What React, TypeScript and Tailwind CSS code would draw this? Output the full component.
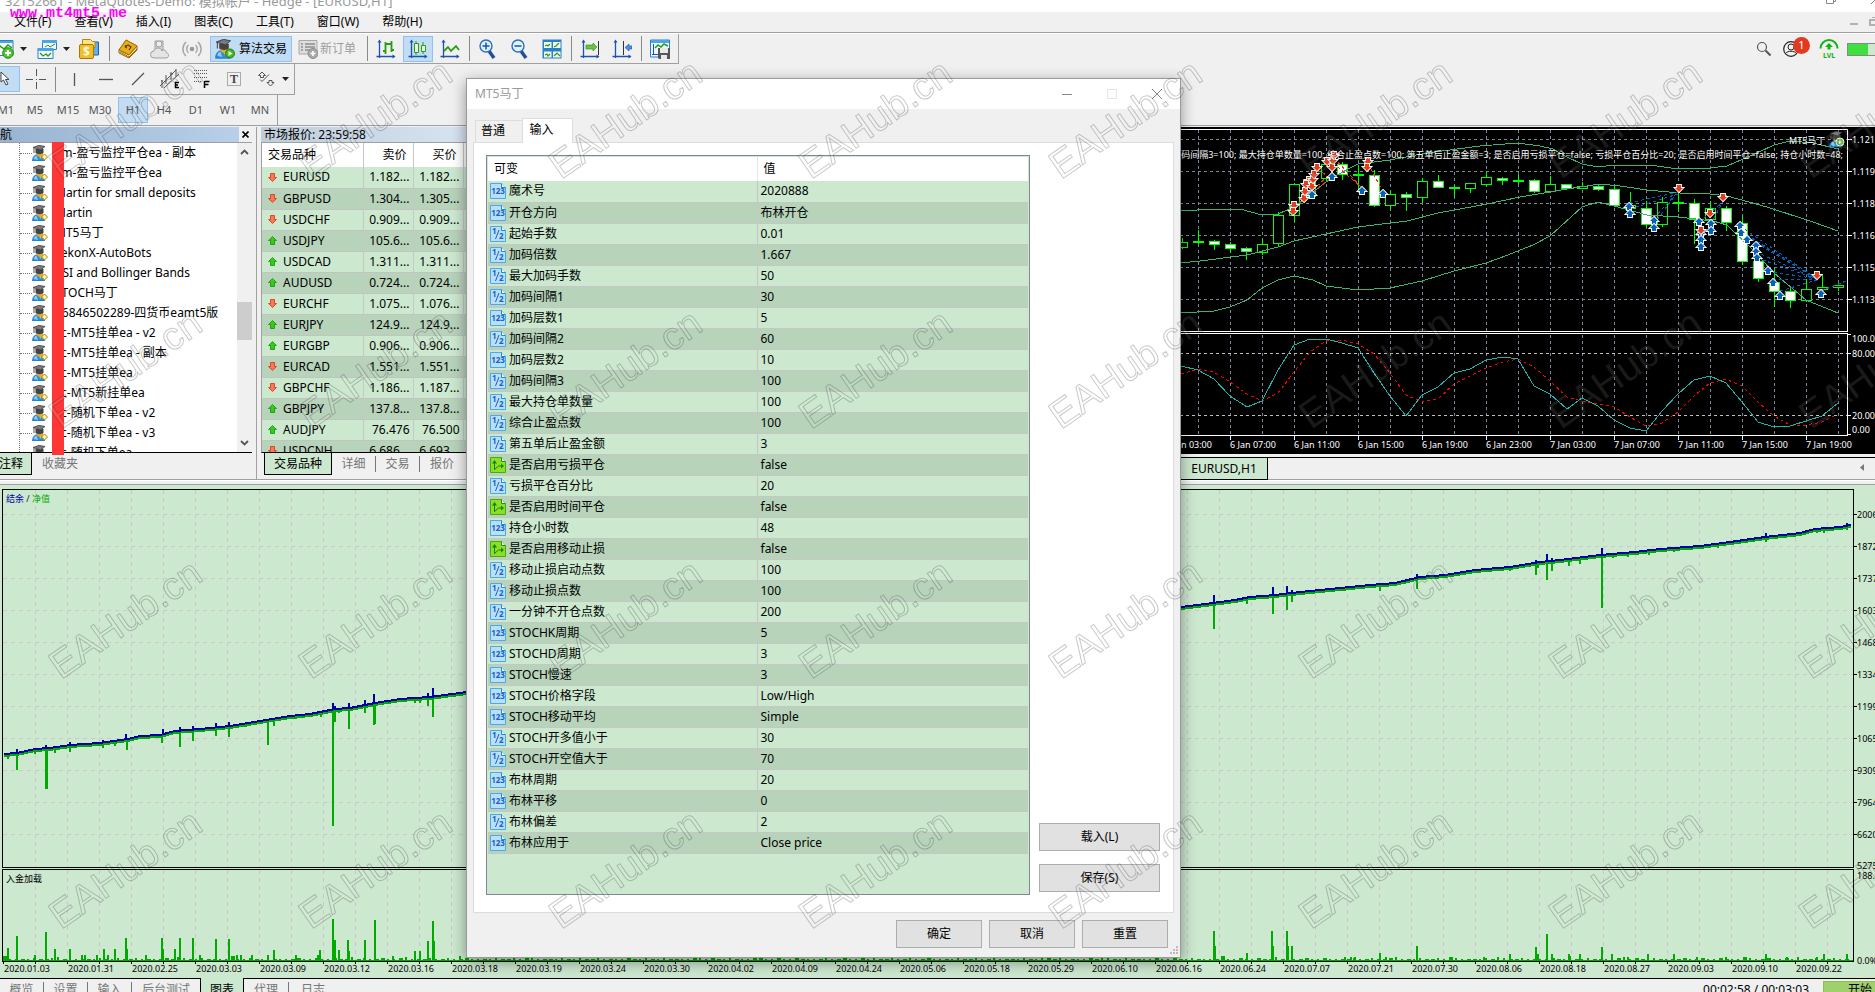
import type { ReactNode } from "react";
import clsx from "clsx";

/* ------------------------------------------------------------------ data */

const menus = ["文件(F)", "查看(V)", "插入(I)", "图表(C)", "工具(T)", "窗口(W)", "帮助(H)"];

const experts = [
  "xm-盈亏监控平仓ea - 副本",
  "xm-盈亏监控平仓ea",
  "Martin for small deposits",
  "Martin",
  "MT5马丁",
  "TekonX-AutoBots",
  "RSI and Bollinger Bands",
  "STOCH马丁",
  "56846502289-四货币eamt5版",
  "xc-MT5挂单ea - v2",
  "xc-MT5挂单ea - 副本",
  "xc-MT5挂单ea",
  "xc-MT5新挂单ea",
  "xc-随机下单ea - v2",
  "xc-随机下单ea - v3",
  "xc-随机下单ea",
];

type Quote = { symbol: string; up: boolean; bid: string; ask: string };

const quotes: Quote[] = [
  { symbol: "EURUSD", up: false, bid: "1.182...", ask: "1.182..." },
  { symbol: "GBPUSD", up: false, bid: "1.304...", ask: "1.305..." },
  { symbol: "USDCHF", up: false, bid: "0.909...", ask: "0.909..." },
  { symbol: "USDJPY", up: true, bid: "105.6...", ask: "105.6..." },
  { symbol: "USDCAD", up: true, bid: "1.311...", ask: "1.311..." },
  { symbol: "AUDUSD", up: true, bid: "0.724...", ask: "0.724..." },
  { symbol: "EURCHF", up: false, bid: "1.075...", ask: "1.076..." },
  { symbol: "EURJPY", up: true, bid: "124.9...", ask: "124.9..." },
  { symbol: "EURGBP", up: true, bid: "0.906...", ask: "0.906..." },
  { symbol: "EURCAD", up: false, bid: "1.551...", ask: "1.551..." },
  { symbol: "GBPCHF", up: false, bid: "1.186...", ask: "1.187..." },
  { symbol: "GBPJPY", up: true, bid: "137.8...", ask: "137.8..." },
  { symbol: "AUDJPY", up: true, bid: "76.476", ask: "76.500" },
  { symbol: "USDCNH", up: false, bid: "6.686...", ask: "6.693..." },
];

type ParamKind = "int" | "double" | "bool";

const params: [ParamKind, string, string][] = [
  ["int", "魔术号", "2020888"],
  ["int", "开仓方向", "布林开仓"],
  ["double", "起始手数", "0.01"],
  ["double", "加码倍数", "1.667"],
  ["double", "最大加码手数", "50"],
  ["double", "加码间隔1", "30"],
  ["int", "加码层数1", "5"],
  ["double", "加码间隔2", "60"],
  ["int", "加码层数2", "10"],
  ["double", "加码间隔3", "100"],
  ["double", "最大持仓单数量", "100"],
  ["double", "综合止盈点数", "100"],
  ["double", "第五单后止盈金额", "3"],
  ["bool", "是否启用亏损平仓", "false"],
  ["double", "亏损平仓百分比", "20"],
  ["bool", "是否启用时间平仓", "false"],
  ["int", "持仓小时数", "48"],
  ["bool", "是否启用移动止损", "false"],
  ["double", "移动止损启动点数", "100"],
  ["double", "移动止损点数", "100"],
  ["double", "一分钟不开仓点数", "200"],
  ["int", "STOCHK周期", "5"],
  ["int", "STOCHD周期", "3"],
  ["int", "STOCH慢速", "3"],
  ["int", "STOCH价格字段", "Low/High"],
  ["int", "STOCH移动平均", "Simple"],
  ["double", "STOCH开多值小于", "30"],
  ["double", "STOCH开空值大于", "70"],
  ["int", "布林周期", "20"],
  ["int", "布林平移", "0"],
  ["double", "布林偏差", "2"],
  ["int", "布林应用于", "Close price"],
];

// x, high, body top, body bottom, low, filled
const candles: [number, number, number, number, number, number][] = [
  [1182, 238, 242, 247, 249, 0],
  [1198, 230, 241, 242, 244, 0],
  [1214, 240, 241, 244, 250, 1],
  [1230, 242, 244, 248, 253, 1],
  [1246, 247, 248, 251, 260, 1],
  [1262, 239, 244, 252, 255, 0],
  [1278, 212, 215, 243, 247, 0],
  [1294, 183, 184, 215, 222, 0],
  [1310, 178, 180, 196, 198, 0],
  [1326, 163, 164, 178, 180, 0],
  [1342, 162, 164, 174, 180, 1],
  [1358, 165, 174, 175, 190, 0],
  [1374, 170, 175, 205, 207, 1],
  [1390, 191, 194, 205, 210, 0],
  [1406, 192, 194, 197, 211, 1],
  [1422, 178, 181, 197, 203, 0],
  [1438, 175, 181, 187, 188, 1],
  [1454, 186, 187, 188, 196, 0],
  [1470, 183, 183, 188, 193, 0],
  [1486, 172, 177, 184, 186, 0],
  [1502, 177, 178, 180, 185, 1],
  [1518, 175, 180, 181, 184, 0],
  [1534, 179, 180, 191, 193, 1],
  [1550, 176, 184, 191, 192, 0],
  [1566, 184, 184, 188, 189, 1],
  [1582, 182, 186, 188, 189, 0],
  [1598, 185, 186, 189, 191, 1],
  [1614, 186, 189, 205, 207, 1],
  [1630, 192, 205, 208, 210, 0],
  [1646, 201, 208, 224, 227, 1],
  [1662, 197, 202, 224, 227, 0],
  [1678, 193, 202, 203, 212, 0],
  [1694, 199, 203, 219, 244, 1],
  [1710, 201, 208, 219, 220, 0],
  [1726, 206, 208, 222, 231, 1],
  [1742, 216, 223, 261, 265, 1],
  [1758, 260, 261, 278, 282, 1],
  [1774, 269, 282, 291, 307, 1],
  [1790, 286, 291, 300, 308, 1],
  [1806, 279, 289, 300, 302, 0],
  [1822, 274, 287, 289, 297, 0],
  [1838, 283, 285, 287, 291, 0],
];

const bandUpper =
  "1181,211 1214,209 1240,209 1262,215 1278,214 1294,207 1310,194 1333,177 1358,164 1390,160 1427,153 1480,146 1518,143 1540,146 1553,149 1567,157 1582,164 1598,167 1614,165 1650,165 1678,169 1710,168 1727,166 1757,153 1774,145 1790,141 1813,143 1838,149";
const bandMiddle =
  "1181,263 1200,261 1247,255 1278,247 1294,241 1326,234 1358,227 1407,221 1438,213 1487,204 1520,197 1550,192 1567,189 1600,184 1620,186 1647,190 1680,193 1710,194 1727,196 1767,207 1813,222 1838,231";
const bandLower =
  "1181,313 1214,311 1230,307 1247,300 1262,288 1278,280 1294,276 1313,280 1326,286 1358,290 1390,288 1422,281 1454,271 1486,263 1500,258 1533,245 1550,236 1582,207 1598,202 1614,206 1647,215 1678,217 1713,221 1727,225 1753,250 1774,273 1806,300 1838,313";
const stochMain =
  "1181,366 1198,370 1214,379 1230,396 1247,407 1262,401 1278,370 1294,345 1310,339 1326,339 1342,343 1358,348 1374,373 1390,396 1406,416 1422,395 1438,387 1454,373 1470,369 1486,360 1503,357 1518,359 1534,386 1550,394 1567,409 1582,398 1598,406 1614,420 1630,428 1646,431 1662,411 1678,394 1694,380 1710,376 1726,383 1742,402 1758,422 1774,427 1790,426 1806,421 1822,416 1838,403";
const stochSignal =
  "1181,374 1198,369 1214,372 1230,382 1247,394 1262,401 1278,393 1294,372 1310,352 1326,341 1342,340 1358,344 1374,354 1390,373 1406,395 1422,402 1438,399 1454,384 1486,368 1503,362 1518,359 1534,367 1550,381 1567,397 1582,401 1614,407 1630,417 1646,426 1662,423 1678,412 1694,396 1710,383 1726,379 1742,386 1758,402 1774,416 1790,425 1806,425 1822,422 1836,415";

const sells: [number, number][] = [
  [1294, 205], [1293, 211], [1304, 198], [1305, 191], [1309, 180], [1306, 184], [1312, 186], [1313, 179],
  [1314, 174], [1317, 167], [1327, 161], [1332, 167], [1333, 160], [1334, 155], [1368, 161], [1367, 167],
  [1679, 188], [1723, 197], [1710, 213], [1817, 275],
];
const buys: [number, number][] = [
  [1312, 195], [1332, 177], [1362, 191], [1383, 194], [1629, 207], [1630, 214], [1654, 221], [1654, 228],
  [1699, 222], [1701, 234], [1701, 240], [1701, 247], [1711, 224], [1711, 231], [1740, 226], [1741, 233],
  [1747, 240], [1756, 246], [1756, 252], [1757, 258], [1768, 271], [1773, 283], [1780, 296], [1821, 294],
];
const buyLinks: [number, number, number, number][] = [
  [1629, 203, 1678, 192], [1630, 209, 1678, 194], [1654, 218, 1678, 192], [1654, 224, 1676, 194],
  [1699, 222, 1723, 202], [1711, 224, 1723, 201], [1740, 226, 1817, 279], [1741, 233, 1817, 279],
  [1747, 235, 1817, 279], [1756, 243, 1817, 279], [1756, 252, 1817, 279], [1757, 258, 1817, 279],
  [1768, 271, 1817, 279], [1773, 279, 1817, 280], [1780, 291, 1817, 280], [1821, 291, 1846, 281],
];
const sellLinks: [number, number, number, number][] = [
  [1294, 207, 1312, 193], [1304, 200, 1332, 177], [1309, 182, 1314, 196], [1313, 190, 1332, 172],
  [1317, 170, 1332, 178], [1334, 158, 1362, 188], [1333, 163, 1360, 186], [1368, 163, 1383, 192],
];

const balance: [number, number][] = [
  [4, 754], [17, 753], [35, 749], [50, 748], [70, 745], [100, 743], [128, 739], [140, 736], [160, 735],
  [175, 731], [200, 729], [230, 726], [260, 721], [290, 716], [310, 714], [335, 709], [350, 708], [375, 703],
  [400, 699], [430, 697], [467, 692], [1181, 607], [1205, 604], [1235, 600], [1250, 597], [1275, 595],
  [1300, 592], [1340, 588], [1370, 585], [1395, 583], [1420, 577], [1445, 575], [1475, 570], [1510, 567],
  [1540, 562], [1560, 560], [1600, 555], [1635, 552], [1660, 549], [1700, 546], [1730, 542], [1765, 537],
  [1800, 533], [1815, 529], [1840, 527], [1851, 525],
];
// x, lowest equity
const drawdowns: [number, number][] = [
  [8, 759], [17, 770], [46, 789], [35, 754], [55, 753], [70, 752], [103, 748], [115, 746], [127, 750],
  [162, 743], [180, 747], [193, 741], [216, 736], [229, 737], [240, 727], [246, 727], [268, 745], [274, 726],
  [296, 719], [321, 717], [333, 826], [335, 722], [339, 713], [349, 729], [365, 713], [374, 725], [415, 703],
  [420, 703], [428, 706], [433, 717], [1188, 609], [1214, 629], [1247, 604], [1273, 614], [1287, 610],
  [1292, 602], [1345, 591], [1351, 590], [1380, 591], [1396, 585], [1417, 589], [1498, 571], [1510, 571],
  [1536, 575], [1538, 568], [1547, 580], [1552, 571], [1569, 566], [1580, 564], [1602, 608], [1613, 558],
  [1628, 557], [1649, 555], [1674, 552], [1718, 548], [1726, 544], [1766, 542], [1817, 533], [1824, 533],
  [1847, 530],
];
// x, highest point
const runups: [number, number][] = [
  [17, 749], [46, 745], [70, 742], [103, 740], [126, 734], [163, 729], [180, 727], [193, 726], [216, 723],
  [229, 722], [333, 703], [335, 706], [349, 703], [365, 700], [374, 694], [428, 693], [433, 688], [1214, 595],
  [1273, 587], [1287, 586], [1292, 590], [1417, 574], [1536, 560], [1547, 554], [1552, 558], [1602, 548],
  [1766, 533], [1847, 523],
];
const loads: [number, number][] = [
  [8, 948], [17, 936], [35, 955], [46, 932], [55, 949], [70, 949], [82, 955], [85, 955], [97, 955], [104, 949],
  [108, 955], [115, 949], [126, 938], [127, 949], [146, 955], [162, 938], [163, 949], [175, 949], [180, 938],
  [193, 938], [200, 955], [216, 939], [229, 939], [237, 955], [241, 955], [252, 955], [268, 955], [274, 950],
  [296, 955], [318, 955], [320, 950], [333, 919], [335, 940], [339, 950], [348, 940], [349, 951], [365, 940],
  [375, 920], [393, 956], [415, 951], [420, 951], [428, 941], [433, 921], [434, 941], [460, 956], [1214, 931],
  [1215, 946], [1247, 953], [1272, 931], [1273, 946], [1287, 931], [1288, 946], [1292, 946], [1345, 957],
  [1351, 957], [1355, 957], [1380, 953], [1386, 957], [1396, 957], [1417, 946], [1484, 957], [1498, 957],
  [1510, 954], [1536, 947], [1538, 954], [1547, 934], [1552, 954], [1569, 954], [1580, 954], [1602, 947],
  [1612, 954], [1628, 957], [1648, 954], [1674, 954], [1697, 957], [1726, 957], [1766, 954], [1787, 957],
  [1817, 957], [1824, 954], [1847, 954],
];

const testDates = [
  "2020.01.03", "2020.01.31", "2020.02.25", "2020.03.03", "2020.03.09", "2020.03.12", "2020.03.16",
  "2020.03.18", "2020.03.19", "2020.03.24", "2020.03.30", "2020.04.02", "2020.04.09", "2020.04.24",
  "2020.05.06", "2020.05.18", "2020.05.29", "2020.06.10", "2020.06.16", "2020.06.24", "2020.07.07",
  "2020.07.21", "2020.07.30", "2020.08.06", "2020.08.18", "2020.08.27", "2020.09.03", "2020.09.10",
  "2020.09.22",
];
const testLevels = [
  "20065", "18721", "17376", "16032", "14687", "13343", "11998", "10654", "9309", "7964", "6620",
];

/* ----------------------------------------------------------------- icons */

function Icon({ children, size = 20 }: { children: ReactNode; size?: 16 | 20 }) {
  return (
    <svg
      viewBox={size === 16 ? "0 0 16 16" : "0 0 20 20"}
      className={clsx("shrink-0", size === 16 ? "size-4" : "size-5")}
      fill="none"
      aria-hidden="true"
    >
      {children}
    </svg>
  );
}

function Graduate() {
  return (
    <>
      <path d="M.5 16c0-4 2-6.500 6-6.500s6 2.500 6 6.500z" fill="#2b8fe0" stroke="#1763ab" strokeWidth=".6" />
      <path d="M2 14c0-2 1-3 2.500-3.500L6 15z" fill="#8ccbf7" />
      <path d="M6 9.500L8.500 14 11 9.500z" fill="#f0b429" />
      <path d="M4.500 7h6.500v1.500c0 2-1.500 3-3.200 3s-3.300-1-3.300-3z" fill="#e8ab26" />
      <path d="M3.500 4v4c2 1.500 6 1.500 8 0V4z" fill="#444" />
      <path d="M1 2.500L7 .3 13 1.500 8.500 5z" fill="#7a7a7a" stroke="#333" strokeWidth=".7" />
      <path d="M2 3v5" stroke="#555" />
    </>
  );
}

function ExpertIcon() {
  return (
    <Icon size={16}>
      <Graduate />
      <path d="M12.500 9l3 3-3 3-3-3z" fill="#fff3a0" stroke="#a58a14" />
    </Icon>
  );
}

function TradeArrow({ up }: { up: boolean }) {
  return (
    <svg viewBox="0 0 9 9" className="size-[9px] shrink-0" aria-hidden="true">
      {up ? (
        <path d="M4.500.5l4 4h-2v4h-4v-4h-2z" fill="#38c91f" stroke="#159107" strokeWidth=".8" />
      ) : (
        <path d="M4.500 8.500l4-4h-2v-4h-4v4h-2z" fill="#ff7552" stroke="#cf3517" strokeWidth=".8" />
      )}
    </svg>
  );
}

function ParamIcon({ kind }: { kind: ParamKind }) {
  const bool = kind === "bool";
  return (
    <svg viewBox="0 0 16 16" className="size-4 shrink-0" aria-hidden="true">
      <path
        d="M.5.500h11l4 4v11H.5z"
        fill={bool ? "#8ddf23" : "#b9e0fb"}
        stroke={bool ? "#3fae13" : "#49a9ea"}
      />
      <path d="M11.500.5v4h4" fill="#fff" stroke={bool ? "#189818" : "#118ce0"} />
      {bool ? (
        <g fill="#17820b">
          <path d="M4.500 13V5M5 12l3.500-3H12" fill="none" stroke="#17820b" />
          <path d="M4.500 3L7 6.500H2zM14 9l-3-2.500v5z" />
        </g>
      ) : kind === "int" ? (
        <text x="8" y="11" textAnchor="middle" fontSize="8" fontWeight="700" fill="#1b5fc4">
          123
        </text>
      ) : (
        <g fill="#1b5fc4" fontSize="8" fontWeight="700">
          <text x="2" y="8">1</text>
          <text x="9" y="13">2</text>
          <path d="M5.500 13L9 4" stroke="#1b5fc4" />
        </g>
      )}
    </svg>
  );
}

function NewChartIcon() {
  return (
    <Icon>
      <path d="M1 1.500h18v15H1z" fill="#f4fbff" stroke="#2a7fc9" />
      <path d="M1 2h18v2H1z" fill="#4ba5e6" />
      <path d="M2 11l4-4 4 3 4-4 4 3" stroke="#2a9a13" strokeWidth="1.500" />
      <circle cx="14" cy="14" r="5.300" fill="#4ec62c" stroke="#2a8b15" />
      <path d="M14 11v6M11 14h6" stroke="#fff" strokeWidth="2" />
    </Icon>
  );
}

function WindowsIcon() {
  return (
    <Icon>
      <path d="M5.500 1.500h14v9h-14z" fill="#f1f9ff" stroke="#2a7fc9" />
      <path d="M5 1h15v3H5z" fill="#4ba5e6" />
      <path d="M8 8l3-2 2 2 5-3" stroke="#2a9a13" />
      <path d="M1 10.500h15v9H1z" fill="#f1f9ff" stroke="#2a7fc9" />
      <path d="M.5 9h16v3H.5z" fill="#4ba5e6" />
      <path d="M3 14l3 3 3-2 2 2 3-3" stroke="#2a9a13" strokeWidth="1.300" />
    </Icon>
  );
}

function MoneyIcon() {
  return (
    <Icon>
      <path d="M8 3h11.500v13H8z" fill="#64aeea" stroke="#1c62ad" />
      <path d="M3.500.500h8l2 2H16v6H3.500z" fill="#fbe486" stroke="#b8860b" />
      <rect x=".5" y="5.500" width="14" height="14" rx="1.500" fill="#f0be2d" stroke="#a87807" />
      <text x="7.500" y="17" textAnchor="middle" fontSize="12" fontWeight="700" fill="#fff8d8">$</text>
    </Icon>
  );
}

function BookIcon() {
  return (
    <Icon>
      <path d="M1 11L8 1l11 6v4l-8 8-10-5z" fill="#fff3bb" stroke="#8c6206" />
      <path d="M1 11L8 1l11 6-8 9z" fill="#e9ad1c" stroke="#a37108" />
      <path d="M1 11l10 5 8-9M2 13l9 5 8-8" stroke="#a37108" />
      <path d="M7 8l3-2 3 2-2 3M7 8l2 1M7 8l1-2" stroke="#5f4000" strokeWidth="1.200" />
    </Icon>
  );
}

function CloudIcon() {
  return (
    <Icon>
      <path d="M5 2h8v9H5z" fill="#d2d2d2" stroke="#a2a2a2" />
      <circle cx="9" cy="5" r="3" fill="#ececec" stroke="#a2a2a2" />
      <path
        d="M4 19a3.500 3.500 0 010-7c1-4 7-4 8 0 1-2 5-1 4 1.500 4 1 3 5.500 0 5.500z"
        fill="#e4e4e4"
        stroke="#a0a0a0"
      />
    </Icon>
  );
}

function SignalIcon() {
  return (
    <Icon>
      <circle cx="10" cy="10" r="2.300" fill="#999" />
      <path
        d="M6.500 14a5.500 5.500 0 010-8M13.500 14a5.500 5.500 0 000-8M4 17A9.500 9.500 0 014 3M16 17a9.500 9.500 0 000-14"
        stroke="#a5a5a5"
        strokeWidth="1.400"
      />
    </Icon>
  );
}

function AlgoIcon() {
  return (
    <Icon>
      <g transform="scale(1.2)">
        <Graduate />
      </g>
      <circle cx="15" cy="14.500" r="4.500" fill="#45b628" stroke="#23810e" />
      <path d="M13.500 12v5l4-2.500z" fill="#fff" />
    </Icon>
  );
}

function OrderIcon() {
  return (
    <Icon>
      <path d="M1 1.500h18V15H1z" fill="#ddd" stroke="#a8a8a8" />
      <path d="M3 5h2M7 5h10M3 8h2M7 8h10M3 11h2M7 11h6" stroke="#8d8d8d" strokeWidth="1.500" />
      <circle cx="15" cy="14.500" r="5" fill="#a9a9a9" stroke="#8b8b8b" />
      <path d="M15 12v5M12.500 14.500h5" stroke="#fff" strokeWidth="1.600" />
    </Icon>
  );
}

function Axes({ children }: { children: ReactNode }) {
  return (
    <Icon>
      <path d="M3.500 2v17M.5 17.500h18" stroke="#1a53b5" strokeWidth="1.300" />
      <path d="M3.500.5l2 3h-4zM19.500 17.500l-3-2v4z" fill="#1a53b5" />
      {children}
    </Icon>
  );
}

function Magnifier({ plus = false }: { plus?: boolean }) {
  return (
    <Icon>
      <path d="M11 12l5 7" stroke="#274f96" strokeWidth="3.500" />
      <circle cx="8" cy="7" r="6" fill="#dff3ff" stroke="#2b70ba" strokeWidth="1.400" />
      <path d={plus ? "M4.500 7h7M8 3.500v7" : "M4.500 7h7"} stroke="#1a53b5" strokeWidth="1.500" />
    </Icon>
  );
}

function TileIcon() {
  return (
    <Icon>
      <path d="M.5.500h19v19H.5z" fill="#2a7fc9" />
      <path d="M2 3h7.500v6H2zM11 3h7.500v6H11zM2 12.500h7.500v6H2zM11 12.500h7.500v6H11z" fill="#f1fff3" />
      <path d="M3 7l2-1 1 1 2-2M12 8l2-1 3-3M3 16l2-1 1 2 2-2M12 17l3-3 3 3" stroke="#2a9a13" strokeWidth="1.200" />
    </Icon>
  );
}

function SaveChartIcon() {
  return (
    <Icon>
      <path d="M.5 1h19v17H.5z" fill="#ebf7ff" stroke="#2a7fc9" />
      <path d="M1 1h18v3H1z" fill="#4ba5e6" />
      <path d="M3.500 5v11M2 15.500h6" stroke="#1a53b5" />
      <path d="M5 9l3-3 3 2 3-3 4 2" stroke="#2a9a13" strokeWidth="1.500" />
      <path d="M8 9h12v11H9l-1-1z" fill="#565656" />
      <path d="M10 9h8v5h-8zM11 16h6v4h-6z" fill="#e9e9e9" />
    </Icon>
  );
}

function Caret() {
  return (
    <svg viewBox="0 0 7 4" className="h-1 w-[7px]" aria-hidden="true">
      <path d="M0 0h7L3.500 4z" fill="#222" />
    </svg>
  );
}

/* -------------------------------------------------------------- toolbars */

function Tool({ label, children, active = false }: { label: string; children: ReactNode; active?: boolean }) {
  return (
    <button
      type="button"
      aria-label={label}
      className={clsx(
        "flex h-[26px] shrink-0 items-center justify-center",
        active ? "mx-px w-[30px] border border-[#8dc3ee] bg-[#c1dcf3]" : "w-8",
      )}
    >
      {children}
    </button>
  );
}

function Separator() {
  return <span className="mr-0.5 ml-[3px] h-[25px] w-px shrink-0 bg-[#8a8a8a]" />;
}

function MainToolbar() {
  return (
    <div className="flex h-[30px] items-center border-r border-b border-[#a0a0a0]">
      <button type="button" aria-label="新图表" className="flex w-3.5 justify-end overflow-hidden">
        <NewChartIcon />
      </button>
      <span className="flex w-[19px] justify-center"><Caret /></span>
      <button type="button" aria-label="配置文件" className="flex w-7 justify-center"><WindowsIcon /></button>
      <span className="flex w-[11px] justify-center"><Caret /></span>
      <button type="button" aria-label="市场报价" className="flex w-[34px] justify-center"><MoneyIcon /></button>
      <Separator />
      <Tool label="导航"><BookIcon /></Tool>
      <Tool label="云"><CloudIcon /></Tool>
      <Tool label="信号"><SignalIcon /></Tool>
      <button
        type="button"
        className="ml-0.5 flex h-[26px] w-[82px] shrink-0 items-center gap-1 border border-[#8dc3ee] bg-[#c1dcf3] pl-1 text-xs whitespace-nowrap"
      >
        <AlgoIcon />
        算法交易
      </button>
      <button type="button" className="flex h-[26px] w-[72px] shrink-0 items-center gap-0.5 pl-1.5 text-xs whitespace-nowrap text-[#9d9d9d]">
        <OrderIcon />
        新订单
      </button>
      <Separator />
      <Tool label="柱状图">
        <Axes>
          <path d="M9.500 3v12M7 12h2.500M9.500 5H13M15.500 2v11M13 5h2.500M15.500 11H18" stroke="#2a9a13" strokeWidth="1.800" />
        </Axes>
      </Tool>
      <Tool label="K线图" active>
        <Axes>
          <path d="M8 2v14M15 3v12" stroke="#2a9a13" />
          <path d="M6.500 4.500h4v9h-4zM13.500 6.500h4v6h-4z" fill="#eafbe4" stroke="#2a9a13" />
        </Axes>
      </Tool>
      <Tool label="折线图">
        <Axes>
          <path d="M4 12l4-4 3 4 5-5 3 4" stroke="#2a9a13" strokeWidth="1.800" />
        </Axes>
      </Tool>
      <Separator />
      <Tool label="放大"><Magnifier plus /></Tool>
      <Tool label="缩小"><Magnifier /></Tool>
      <Tool label="平铺窗口"><TileIcon /></Tool>
      <Separator />
      <Tool label="自动滚动">
        <Axes>
          <path d="M6 6h7V4l4 4-4 4v-2H6z" fill="#6fc342" stroke="#2a8b15" strokeWidth=".6" />
          <path d="M18.500 2v14" stroke="#333" />
        </Axes>
      </Tool>
      <Tool label="图表移位">
        <Axes>
          <path d="M11.500 2v14" stroke="#333" />
          <path d="M20 7h-3V5l-4 3.500 4 3.500v-2h3z" fill="#4c8fea" stroke="#1a53b5" strokeWidth=".6" />
        </Axes>
      </Tool>
      <Separator />
      <Tool label="保存模板"><SaveChartIcon /></Tool>
      <span className="w-0.5" />
    </div>
  );
}

function DrawingToolbar() {
  return (
    <div className="flex h-[31px] w-[295px] items-center border-r border-b border-[#a0a0a0]">
      <button type="button" aria-label="光标" className="flex h-[26px] w-5 items-center overflow-hidden border border-l-0 border-[#8dc3ee] bg-[#c1dcf3]">
        <svg viewBox="0 0 10 16" className="h-4 w-2.5" aria-hidden="true">
          <path d="M1 1v10l2.500-2L6 14l2-1-2.500-4.500H9z" fill="#fff" stroke="#444" />
        </svg>
      </button>
      <Tool label="十字线">
        <Icon>
          <path d="M0 10.500h7M13 10.500h7M10.500 0v7M10.500 13v7M10 10.500h1" stroke="#555" />
        </Icon>
      </Tool>
      <Separator />
      <Tool label="垂直线"><Icon><path d="M10.500 4v13" stroke="#555" strokeWidth="1.300" /></Icon></Tool>
      <Tool label="水平线"><Icon><path d="M3 10.500h14" stroke="#555" strokeWidth="1.300" /></Icon></Tool>
      <Tool label="趋势线"><Icon><path d="M4 16L16 4" stroke="#555" strokeWidth="1.300" /></Icon></Tool>
      <Tool label="等距通道">
        <Icon>
          <path d="M0 17L16 1M4 19L19 5M2 19v-8M6 15V6M11 11V3M16 8V0M1 12h2M10 5h3" stroke="#555" />
          <path d="M15.500 13v6M15 13.500h4M15 16h3M15 18.500h4" stroke="#000" strokeWidth="1.500" />
        </Icon>
      </Tool>
      <Tool label="斐波那契">
        <Icon>
          <path d="M2 1.500h14M2 4.500h14M2 8.500h14M2 12.500h8" stroke="#555" strokeDasharray="1 1" />
          <path d="M12.500 12v7M12.500 12.500h5M12.500 15.500h4" stroke="#000" strokeWidth="1.500" />
        </Icon>
      </Tool>
      <Tool label="文字">
        <Icon>
          <path d="M3.500 3.500h13v13h-13z" stroke="#666" strokeDasharray="1 1" />
          <text x="10" y="14" textAnchor="middle" fontSize="12" fontWeight="700" fontFamily="Liberation Serif, serif" fill="#444">T</text>
        </Icon>
      </Tool>
      <Tool label="图形">
        <Icon>
          <path d="M6 3l3.500 3.500h-2v2h-3v-2h-2zM14.500 17l3.500-3.500h-2v-2h-3v2h-2zM4 10.500l2 2 7-7" stroke="#555" />
        </Icon>
      </Tool>
      <Caret />
    </div>
  );
}

const periods: [string, string][] = [
  ["M1", "w-5 -ml-1"],
  ["M5", "w-[38px]"],
  ["M15", "w-7"],
  ["M30", "w-9"],
  ["H1", "w-[30px] border border-[#8dc3ee] bg-[#c1dcf3]"],
  ["H4", "w-8"],
  ["D1", "w-8"],
  ["W1", "w-8"],
  ["MN", "w-8"],
];

function PeriodToolbar() {
  return (
    <div className="flex h-[30px] w-[278px] items-center border-r border-[#a0a0a0] text-[11px] text-[#555]">
      {periods.map(([name, cls]) => (
        <button key={name} type="button" className={clsx("h-[26px] shrink-0", cls)}>
          {name}
        </button>
      ))}
    </div>
  );
}

function AccountTools() {
  return (
    <div className="flex h-[30px] items-center">
      <Tool label="搜索">
        <Icon>
          <circle cx="9" cy="8" r="4.500" stroke="#555" strokeWidth="1.200" />
          <path d="M12.500 11.500l5 5" stroke="#555" strokeWidth="2" />
        </Icon>
      </Tool>
      <button type="button" aria-label="通知" className="relative flex w-[34px] pl-0.5">
        <Icon>
          <circle cx="10" cy="10" r="7.300" stroke="#222" strokeWidth="1.200" />
          <circle cx="10" cy="8" r="3" stroke="#222" />
          <path d="M4.500 14.500c2-3 9-3 11 0" stroke="#222" />
        </Icon>
        <span className="absolute -top-0.5 left-3.5 size-[17px] rounded-full bg-[#e03a20] text-center text-[11px] leading-4 text-white">
          1
        </span>
      </button>
      <button type="button" aria-label="等级" className="flex w-8 justify-center">
        <Icon>
          <path d="M1.500 9.500a8.500 8.500 0 0117 0" stroke="#12b312" strokeWidth="2" />
          <path d="M10 4l4 4h-2.500v2.500h-3V8H6z" fill="#12b312" />
          <text x="10" y="19" textAnchor="middle" fontSize="7" fontWeight="700" fill="#12b312">LVL</text>
        </Icon>
      </button>
      <span className="ml-0.5 flex h-[13px] w-7 border border-r-0 border-[#888] bg-[#cce8cf]">
        <span className="w-5 bg-[#40df40]" />
      </span>
    </div>
  );
}

/* ---------------------------------------------------------------- panels */

function PanelTab({ active = false, children }: { active?: boolean; children: ReactNode }) {
  return (
    <button
      type="button"
      className={clsx(
        "h-[22px] shrink-0 text-xs leading-5",
        active ? "w-[68px] border border-t-0 border-black bg-[#cce8cf] text-black" : "px-2.5 text-[#777]",
      )}
    >
      {children}
    </button>
  );
}

function Navigator() {
  return (
    <section className="relative flex w-[257px] shrink-0 flex-col border-r border-[#a0a0a0] pr-1">
      <header className="flex h-[15px] items-center justify-between bg-[linear-gradient(90deg,#99b4d1,#b9d1ea)] text-xs">
        <span className="leading-[15px]">航</span>
        <button type="button" aria-label="关闭" className="flex h-[15px] w-[13px] items-center justify-center bg-[#f0f0f0]">
          <svg viewBox="0 0 7 7" className="size-[7px]" aria-hidden="true">
            <path d="M.5.500l6 6M6.500.500l-6 6" stroke="#000" strokeWidth="1.600" />
          </svg>
        </button>
      </header>
      <div className="flex h-[311px] border-t border-b border-t-[#a0a0a0] border-b-black bg-white">
        <ul className="ml-[19px] flex-1 overflow-hidden border-l border-dotted border-[#777] text-xs">
          {experts.map((name) => (
            <li key={name} className="flex h-5 items-center whitespace-nowrap">
              <span className="w-3 border-t border-dotted border-[#777]" />
              <ExpertIcon />
              <span className="ml-[7px]">{name}</span>
            </li>
          ))}
        </ul>
        <div className="flex w-[15px] flex-col items-center bg-[#f0f0f0] py-1.5">
          <svg viewBox="0 0 9 6" className="h-1.5 w-[9px]" aria-hidden="true">
            <path d="M1 5l3.500-3.500L8 5" stroke="#555" strokeWidth="1.800" fill="none" />
          </svg>
          <span className="mt-[147px] mb-auto h-[38px] w-[15px] bg-[#cdcdcd]" />
          <svg viewBox="0 0 9 6" className="h-1.5 w-[9px]" aria-hidden="true">
            <path d="M1 1l3.500 3.500L8 1" stroke="#555" strokeWidth="1.800" fill="none" />
          </svg>
        </div>
      </div>
      <div className="flex">
        <button type="button" className="-ml-1.5 h-[22px] w-[38px] shrink-0 border-r border-b border-black bg-[#cce8cf] pr-2 text-right text-xs leading-5 whitespace-nowrap">
          注释
        </button>
        <PanelTab>收藏夹</PanelTab>
      </div>
      <span className="absolute top-[15px] left-[52px] h-[313px] w-3 bg-[#ff3636]" />
    </section>
  );
}

function MarketWatch() {
  return (
    <section className="flex w-[220px] shrink-0 flex-col pl-1">
      <header className="h-[15px] bg-[linear-gradient(90deg,#bfcddb,#d7e4f2)] pl-[3px] text-xs leading-[15px]">
        市场报价: 23:59:58
      </header>
      <div className="h-[311px] overflow-hidden border-t border-b border-l border-t-[#a0a0a0] border-b-black border-l-[#a0a0a0] bg-[#cce8cf]">
        <table className="w-full table-fixed border-collapse text-xs">
          <thead>
            <tr className="h-6 bg-white">
              <th className="w-[101px] border-r border-[#c8c8c8] pl-1.5 text-left font-normal">交易品种</th>
              <th className="w-[50px] border-r border-[#c8c8c8] pr-1.5 text-right font-normal">卖价</th>
              <th className="w-[50px] border-r border-[#c8c8c8] pr-1.5 text-right font-normal">买价</th>
              <th aria-label="更多" />
            </tr>
          </thead>
          <tbody>
            {quotes.map((q) => (
              <tr key={q.symbol} className="h-[21px] border-b border-[#c3c3c3] even:bg-[#b7d3ba]">
                <td className="border-r border-[#c8c8c8] p-0 pl-1.5">
                  <span className="flex items-center gap-1.5">
                    <TradeArrow up={q.up} />
                    <span className="leading-5">{q.symbol}</span>
                  </span>
                </td>
                <td className="border-r border-[#c8c8c8] p-0 pr-[3px] text-right leading-5">{q.bid}</td>
                <td className="border-r border-[#c8c8c8] p-0 pr-[3px] text-right leading-5">{q.ask}</td>
                <td />
              </tr>
            ))}
          </tbody>
        </table>
      </div>
      <div className="flex items-center divide-x divide-[#777] pl-[3px]">
        <PanelTab active>交易品种</PanelTab>
        {["详细", "交易", "报价"].map((t) => (
          <button key={t} type="button" className="h-4 w-11 text-xs leading-4 text-[#777]">
            {t}
          </button>
        ))}
      </div>
    </section>
  );
}

function DealMark({ x, y, buy = false }: { x: number; y: number; buy?: boolean }) {
  return (
    <path
      d={buy ? "M0-4l4 4H2v3h-4V0h-2z" : "M0 4l4-4H2v-3h-4V0h-2z"}
      transform={`translate(${x} ${y})`}
      fill={buy ? "#0560b8" : "#e53d1c"}
      stroke="#fff"
      strokeWidth="1.800"
      paintOrder="stroke"
    />
  );
}

function PriceChart() {
  const columns = Array.from({ length: 21 }, (_, i) => 1198.5 + i * 32);
  const rows = ["1.1210", "1.1195", "1.1180", "1.1165", "1.1150", "1.1135"];
  const hours = ["03:00", "07:00", "11:00", "15:00", "19:00", "23:00"];
  return (
    <svg
      viewBox="1180 127 695 328"
      preserveAspectRatio="xMaxYMin slice"
      className="h-[328px] w-[695px] shrink-0 bg-black text-[9px]"
      role="img"
      aria-label="EURUSD,H1"
    >
      <g shapeRendering="crispEdges">
        <g stroke="#778899" strokeDasharray="3 3">
          {columns.map((x) => (
            <path key={x} d={`M${x} 130V331M${x} 335V435`} />
          ))}
          {rows.map((r, i) => (
            <path key={r} d={`M1180 ${139.5 + i * 32}H1847`} />
          ))}
        </g>
        <path d="M1180 353.500H1847M1180 415.500H1847" stroke="#c0c0c0" strokeDasharray="3 3" />
        <path d="M1180 129.500H1847.500V331.500H1180M1180 333.500H1847.500V435.500H1180" stroke="#fff" fill="none" />
        {rows.map((r, i) => (
          <path key={r} d={`M1848 ${139.5 + i * 32}h4`} stroke="#fff" />
        ))}
        <path d="M1848 334.500h3M1848 353.500h3M1848 415.500h3M1848 434.500h3" stroke="#fff" />
        {Array.from({ length: 10 }, (_, i) => (
          <path key={i} d={`M${1230.5 + i * 64} 436v4`} stroke="#fff" />
        ))}
      </g>

      <g fill="none" shapeRendering="crispEdges">
        <polyline points={stochSignal} stroke="#ff0000" strokeDasharray="3 3" />
        <polyline points={stochMain} stroke="#20b2aa" />
      </g>

      <g shapeRendering="crispEdges" stroke="#00ff00">
        {candles.map(([x, high, top, bottom, low, filled]) => (
          <g key={x}>
            <path d={`M${x + 0.5} ${high}V${low}`} />
            <rect x={x - 4.5} y={top + 0.5} width="10" height={bottom - top} fill={filled ? "#fff" : "#000"} />
          </g>
        ))}
      </g>

      <g fill="none" stroke="#3cb371" shapeRendering="crispEdges">
        <polyline points={bandUpper} />
        <polyline points={bandMiddle} />
        <polyline points={bandLower} />
      </g>

      <g strokeDasharray="3 3" shapeRendering="crispEdges">
        {buyLinks.map((l) => (
          <path key={l.join()} d={`M${l[0]} ${l[1]}L${l[2]} ${l[3]}`} stroke="#0560b8" />
        ))}
        {sellLinks.map((l) => (
          <path key={l.join()} d={`M${l[0]} ${l[1]}L${l[2]} ${l[3]}`} stroke="#e53d1c" />
        ))}
      </g>
      {buys.map(([x, y]) => (
        <DealMark key={`${x}-${y}`} x={x} y={y} buy />
      ))}
      {sells.map(([x, y]) => (
        <DealMark key={`${x}-${y}`} x={x} y={y} />
      ))}
      <DealMark x={1701} y={230} />

      <g fill="#fff">
        <text x="1843" y="158" textAnchor="end">
          加码间隔3=100; 最大持仓单数量=100; 综合止盈点数=100; 第五单后止盈金额=3; 是否启用亏损平仓=false;
          亏损平仓百分比=20; 是否启用时间平仓=false; 持仓小时数=48;
        </text>
        <text x="1789" y="144">MT5马丁</text>
        {rows.map((r, i) => (
          <text key={r} x="1852" y={143 + i * 32}>{r}</text>
        ))}
        <text x="1852" y="342">100.00</text>
        <text x="1852" y="357">80.00</text>
        <text x="1852" y="419">20.00</text>
        <text x="1852" y="433">0.00</text>
        {Array.from({ length: 11 }, (_, i) => (
          <text key={i} x={1166 + i * 64} y="448">
            {`${i < 6 ? 6 : 7} Jan ${hours[i % 6]}`}
          </text>
        ))}
      </g>
      <g transform="translate(1829 131)">
        <Graduate />
        <circle cx="11" cy="11" r="4" fill="#6dbb45" stroke="#e8f5df" />
        <path d="M10 9v4l3-2z" fill="#fff" />
      </g>
    </svg>
  );
}

function ChartArea() {
  return (
    <section className="flex min-w-0 flex-1 flex-col">
      <div className="flex h-[328px] justify-end overflow-hidden bg-black">
        <PriceChart />
      </div>
      <div className="mt-[3px] flex h-[22px] items-start justify-between border-t border-black pr-[11px]">
        <div className="flex">
          <span className="w-[703px]" />
          <button type="button" className="h-[22px] w-[88px] border border-t-0 border-black bg-[#cce8cf] text-xs leading-5">
            EURUSD,H1
          </button>
        </div>
        <svg viewBox="0 0 4 7" className="mt-1.5 h-[7px] w-1" aria-hidden="true">
          <path d="M4 0v7L0 3.500z" fill="#777" />
        </svg>
      </div>
    </section>
  );
}

/* ---------------------------------------------------------------- tester */

function TesterGraph() {
  const line = balance.map((p) => p.join()).join(" ");
  const columns = Array.from({ length: 57 }, (_, i) => 35.5 + i * 32);
  return (
    <svg
      viewBox="0 485 1875 493"
      preserveAspectRatio="xMinYMin slice"
      className="h-[493px] w-full shrink-0 bg-[#cce8cf] text-[9px]"
      role="img"
      aria-label="结余 / 净值"
    >
      <g shapeRendering="crispEdges">
        <g stroke="#cdc6cf" strokeDasharray="4 4">
          {columns.map((x) => (
            <path key={x} d={`M${x} 490V867M${x} 870V961`} />
          ))}
          {testLevels.map((l, i) => (
            <path key={l} d={`M3 ${514.5 + i * 32}H1853`} />
          ))}
        </g>
        <path d="M2.500 489.500H1853.500V867.500H2.500zM2.500 869.500H1853.500V961.500H2.500z" stroke="#000" fill="none" />
        {testLevels.map((l, i) => (
          <path key={l} d={`M1854 ${514.5 + i * 32}h3`} stroke="#000" />
        ))}
        {Array.from({ length: 58 }, (_, i) => (
          <path key={i} d={`M${3.5 + i * 32} 962v2`} stroke="#000" />
        ))}

        <g stroke="#00aa00" fill="none">
          <polyline points={line} strokeWidth="2" transform="translate(0 2)" />
          {drawdowns.map(([x, y]) => (
            <path key={x} d={`M${x} ${y}V${baseAt(x)}`} strokeWidth="2" />
          ))}
          <path d="M47.500 789V748M375.500 724V703" />
        </g>
        <g stroke="#0000aa" fill="none" strokeWidth="2">
          <polyline points={line} />
          {runups.map(([x, y]) => (
            <path key={x} d={`M${x} ${y}V${baseAt(x)}`} />
          ))}
        </g>

        <g fill="#00aa00">
          {Array.from({ length: 308 }, (_, i) => {
            const h = 1 + ((i * 7) % 11 < 3 ? 1 : 0) + ((i * 13) % 29 < 2 ? 2 : 0);
            return <rect key={i} x={3 + i * 6} y={960 - h} width={(i * 5) % 7 < 3 ? 4 : 2} height={h} />;
          })}
          <rect x="3" y="960" width="1850" height="1" />
          {loads.map(([x, y]) => (
            <rect key={x} x={x - 1} y={y} width="2" height={961 - y} />
          ))}
        </g>
      </g>

      <text x="6" y="502" fill="#0000aa">
        结余 <tspan fill="#222">/</tspan> <tspan fill="#00aa00">净值</tspan>
      </text>
      <text x="6" y="882">入金加载</text>
      {testDates.map((d, i) => (
        <text key={d} x={4 + i * 64} y="972">{d}</text>
      ))}
      {testLevels.map((l, i) => (
        <text key={l} x="1857" y={518 + i * 32}>{l}</text>
      ))}
      <text x="1857" y="869">5275</text>
      <text x="1857" y="879">188.4%</text>
      <text x="1857" y="964">0.0%</text>
    </svg>
  );
}

// balance height at a given x, interpolated between the known points
function baseAt(x: number) {
  const i = balance.findIndex((p) => p[0] >= x);
  if (i <= 0) return balance[0][1];
  const [x0, y0] = balance[i - 1];
  const [x1, y1] = balance[i];
  return Math.round(y0 + ((y1 - y0) * (x - x0)) / (x1 - x0));
}

function TesterTabs() {
  const idle = "h-4 text-xs leading-4 text-[#777]";
  return (
    <footer className="flex min-h-[14px] flex-1 items-start justify-between overflow-hidden">
      <nav className="flex flex-1 items-start">
        <div className="flex divide-x divide-[#777] border-t border-r border-black pt-[3px]">
          {["概览", "设置", "输入"].map((t) => (
            <button key={t} type="button" className={clsx(idle, "w-11")}>{t}</button>
          ))}
          <button type="button" className={clsx(idle, "w-[68px]")}>后台测试</button>
        </div>
        <button type="button" className="h-7 w-[42px] bg-[#cce8cf] pt-1 pb-2 text-xs leading-4">图表</button>
        <div className="flex flex-1 divide-x divide-[#777] border-t border-l border-black pt-[3px]">
          <button type="button" className={clsx(idle, "w-[45px]")}>代理</button>
          <button type="button" className={clsx(idle, "w-12")}>日志</button>
        </div>
      </nav>
      <div className="flex border-t border-black pt-0.5 text-xs">
        <span className="pt-px pr-3.5 leading-4">00:02:58 / 00:03:03</span>
        <button type="button" className="h-7 w-[52px] border border-r-0 border-[#8bc34a] bg-[#a0d06c] pb-2.5 pl-6 text-left leading-4 whitespace-nowrap">
          开始
        </button>
      </div>
    </footer>
  );
}

/* ---------------------------------------------------------------- dialog */

function DialogButton({ children, className }: { children: ReactNode; className: string }) {
  return (
    <button type="button" className={clsx("h-7 border border-[#adadad] bg-[#e1e1e1] text-xs", className)}>
      {children}
    </button>
  );
}

function InputsDialog() {
  return (
    <div
      role="dialog"
      aria-label="MT5马丁"
      className="absolute top-[78px] bottom-[34px] left-[466px] flex w-[715px] flex-col border border-[#999] bg-[#f0f0f0] shadow-[0_4px_14px_rgba(0,0,0,0.4)]"
    >
      <header className="flex h-[30px] shrink-0 items-center justify-between bg-white pr-[18px] pl-2">
        <h2 className="text-xs text-[#999]">MT5马丁</h2>
        <div className="flex gap-[35px]">
          <button type="button" aria-label="最小化">
            <svg viewBox="0 0 10 10" className="size-2.5"><path d="M0 5.500h10" stroke="#888" /></svg>
          </button>
          <button type="button" aria-label="最大化">
            <svg viewBox="0 0 10 10" className="size-2.5"><path d="M.5.500h9v9h-9z" stroke="#e2e2e2" fill="none" /></svg>
          </button>
          <button type="button" aria-label="关闭">
            <svg viewBox="0 0 10 10" className="size-2.5"><path d="M0 0l10 10M10 0L0 10" stroke="#888" /></svg>
          </button>
        </div>
      </header>

      <div className="flex min-h-0 flex-1 flex-col px-1.5 pt-[9px]">
        <div className="flex items-end pl-0.5 text-xs">
          <button type="button" className="h-[22px] w-[47px] border border-r-0 border-b-0 border-[#dcdcdc] pr-3 pb-0.5">
            普通
          </button>
          <button type="button" className="relative z-10 -mb-px h-[25px] w-[51px] border border-b-0 border-[#dcdcdc] bg-white pr-3 pb-0.5">
            输入
          </button>
        </div>
        <div className="flex min-h-0 flex-1 gap-[9px] border border-[#dcdcdc] bg-white pt-3 pr-[13px] pb-[17px] pl-3">
          <div className="min-h-0 flex-1 overflow-hidden border border-[#828790] bg-[#cce8cf] p-px">
            <table className="w-full table-fixed border-collapse text-xs">
              <thead>
                <tr className="h-6 bg-white text-left">
                  <th className="w-[269px] border-r border-[#e5e5e5] pl-1.5 font-normal">可变</th>
                  <th className="pl-1.5 font-normal">值</th>
                </tr>
              </thead>
              <tbody>
                {params.map(([kind, name, value]) => (
                  <tr key={name} className="h-[21px] border-b border-[#c6c6c6] even:bg-[#b7d3ba]">
                    <td className="border-r border-[#c6c6c6] p-0 pl-0.5">
                      <span className="flex items-center gap-[3px] leading-5">
                        <ParamIcon kind={kind} />
                        {name}
                      </span>
                    </td>
                    <td className="p-0 pl-[3px] leading-5">{value}</td>
                  </tr>
                ))}
              </tbody>
            </table>
          </div>
          <div className="flex w-[121px] flex-col justify-end gap-[13px] pb-[3px]">
            <DialogButton className="w-full">载入(L)</DialogButton>
            <DialogButton className="w-full">保存(S)</DialogButton>
          </div>
        </div>
        <div className="flex h-11 shrink-0 items-start justify-end gap-[7px] pt-[7px] pr-1.5">
          <DialogButton className="w-[86px]">确定</DialogButton>
          <DialogButton className="w-[86px]">取消</DialogButton>
          <DialogButton className="w-[86px]">重置</DialogButton>
        </div>
      </div>
      <svg viewBox="0 0 9 9" className="absolute right-px bottom-0.5 size-[9px]" aria-hidden="true">
        <path d="M6 0h2v2H6zM6 3h2v2H6zM6 6h2v2H6zM3 3h2v2H3zM3 6h2v2H3zM0 6h2v2H0z" fill="#bbb" />
      </svg>
    </div>
  );
}

function Watermark() {
  return (
    <svg className="pointer-events-none absolute inset-0 size-full" aria-hidden="true">
      <defs>
        <pattern id="mark" width="250" height="250" patternUnits="userSpaceOnUse">
          <text
            x="61"
            y="180"
            transform="rotate(-35 61 180)"
            fontFamily="Liberation Sans, sans-serif"
            fontSize="39"
            fill="#fff"
            fillOpacity="0.1"
            stroke="#000"
            strokeOpacity="0.22"
          >
            EAHub.cn
          </text>
        </pattern>
      </defs>
      <rect width="100%" height="100%" fill="url(#mark)" />
    </svg>
  );
}

export default function App() {
  return (
    <div className="relative flex h-screen flex-col overflow-hidden bg-[#f0f0f0] font-['Noto_Sans','Noto_Sans_CJK_SC',sans-serif] text-black">
      <div className="flex h-3 shrink-0 items-end justify-between overflow-hidden bg-white pl-[5px] text-[#999]">
        <span className="pb-[3px] text-[13px] leading-4 whitespace-nowrap">
          32152661 - MetaQuotes-Demo: 模拟帐户 - Hedge - [EURUSD,H1]
        </span>
        <svg viewBox="0 0 50 12" className="h-3 w-[50px]" aria-hidden="true">
          <path d="M1.500 0v3.500h7V0M8 1.500h2.500V0M46 4l4-4" stroke="#888" fill="none" />
        </svg>
      </div>

      <div className="flex h-[21px] shrink-0 items-center justify-between border-b border-[#a0a0a0] text-xs">
        <nav className="flex gap-px pl-[3px]">
          {menus.map((m) => (
            <button key={m} type="button" className="px-[11px] leading-5">{m}</button>
          ))}
        </nav>
        <svg viewBox="0 0 26 10" className="h-2.5 w-[26px]" aria-hidden="true">
          <path d="M1 7h8" stroke="#b0b0b0" strokeWidth="2" />
          <path d="M21 3h8v5h-8zM23 0h5" stroke="#b0b0b0" strokeWidth="2" fill="none" />
        </svg>
      </div>

      <div className="flex shrink-0 justify-between border-t border-white">
        <MainToolbar />
        <AccountTools />
      </div>
      <div className="flex shrink-0"><DrawingToolbar /></div>
      <div className="flex shrink-0 border-b border-[#a0a0a0]"><PeriodToolbar /></div>

      <div className="flex h-[354px] shrink-0 border-b border-[#a0a0a0] pt-px">
        <Navigator />
        <MarketWatch />
        <ChartArea />
      </div>
      <div className="h-[5px] shrink-0 border-t border-b border-t-white border-b-[#a0a0a0]" />
      <TesterGraph />
      <TesterTabs />

      <InputsDialog />
      <span className="absolute top-1 left-2.5 font-['Liberation_Mono',monospace] text-[15px] leading-5 font-bold text-[#ff00ff]">
        www.mt4mt5.me
      </span>
      <Watermark />
    </div>
  );
}
